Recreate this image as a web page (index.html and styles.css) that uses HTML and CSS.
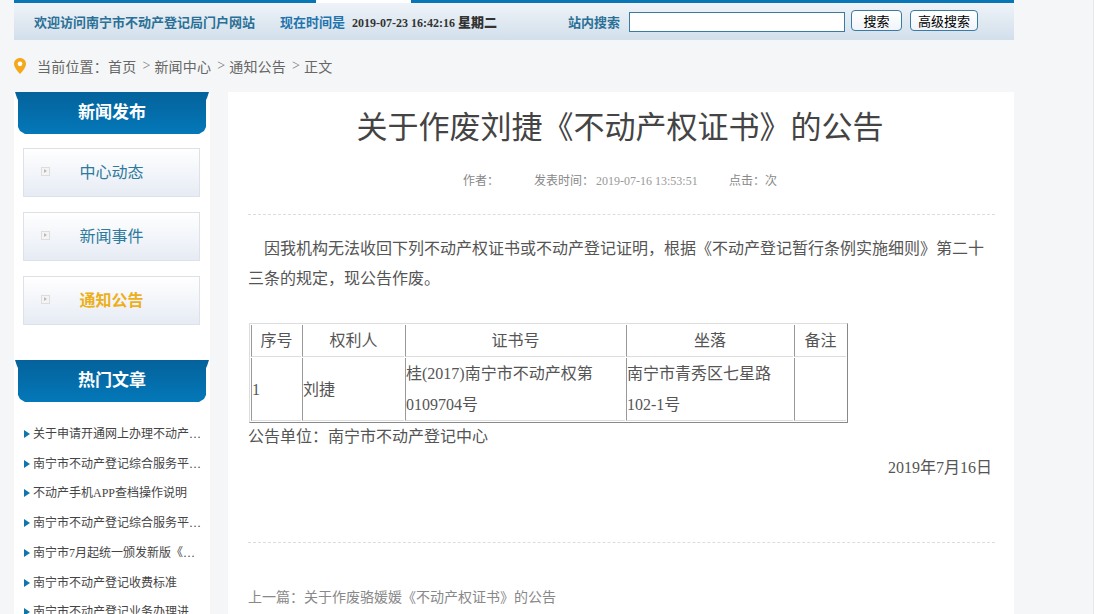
FILE: index.html
```html
<!DOCTYPE html>
<html lang="zh-CN">
<head>
    <meta charset="UTF-8">
    <title>关于作废刘捷《不动产权证书》的公告</title>
    <link rel="stylesheet" href="styles.css">
</head>
<body>
    <div class="wrap">
        <div class="topline"></div>
        <div class="topbar">
            <span class="welcome">欢迎访问南宁市不动产登记局门户网站</span>
            <span class="now">现在时间是</span>
            <span class="clock">2019-07-23 16:42:16 <b>星期二</b></span>
            <span class="search-label">站内搜索</span>
            <input class="search-input" type="text">
            <button class="search-btn" type="button">搜索</button>
            <button class="search-btn wide" type="button">高级搜索</button>
        </div>

        <div class="crumbs">
            <svg class="pin" width="12" height="16" viewBox="0 0 12 16">
                <path d="M6 0C2.700 0 0 2.600 0 5.900 0 9.900 6 16 6 16s6-6.100 6-10.100C12 2.600 9.300 0 6 0z" fill="#f5a81c"/>
                <circle cx="6" cy="5.800" r="2.400" fill="#fff"/>
            </svg>
            <span>当前位置：首页</span>
            <span class="sep">&gt;</span><span>新闻中心</span>
            <span class="sep">&gt;</span><span>通知公告</span>
            <span class="sep">&gt;</span><span>正文</span>
        </div>

        <div class="columns">
            <div class="side">
                <h2 class="side-title">新闻发布</h2>
                <ul class="side-menu">
                    <li><i class="arrow-box"></i>中心动态</li>
                    <li><i class="arrow-box"></i>新闻事件</li>
                    <li class="active"><i class="arrow-box"></i>通知公告</li>
                </ul>
                <h2 class="side-title">热门文章</h2>
                <ul class="hot-list">
                    <li>关于申请开通网上办理不动产登记业务的通知</li>
                    <li>南宁市不动产登记综合服务平台上线公告</li>
                    <li>不动产手机APP查档操作说明</li>
                    <li>南宁市不动产登记综合服务平台使用说明</li>
                    <li>南宁市7月起统一颁发新版《不动产权证书》</li>
                    <li>南宁市不动产登记收费标准</li>
                    <li>南宁市不动产登记业务办理进度查询</li>
                </ul>
            </div>

            <div class="main">
                <h1 class="title">关于作废刘捷《不动产权证书》的公告</h1>
                <div class="meta">
                    <span class="author">作者：</span>
                    <span class="time">发表时间：<span class="stamp">2019-07-16 13:53:51</span></span>
                    <span class="hits">点击：<span>次</span></span>
                </div>
                <div class="content">
                    <p class="indent">因我机构无法收回下列不动产权证书或不动产登记证明，根据《不动产登记暂行条例实施细则》第二十三条的规定，现公告作废。</p>
                    <table class="cert-table">
                        <tr class="head">
                            <td class="c1">序号</td>
                            <td class="c2">权利人</td>
                            <td class="c3">证书号</td>
                            <td class="c4">坐落</td>
                            <td class="c5">备注</td>
                        </tr>
                        <tr>
                            <td>1</td>
                            <td>刘捷</td>
                            <td>桂(2017)南宁市不动产权第0109704号</td>
                            <td>南宁市青秀区七星路102-1号</td>
                            <td></td>
                        </tr>
                    </table>
                    <p>公告单位：南宁市不动产登记中心</p>
                    <p class="date">2019年7月16日</p>
                </div>
                <div class="prev">上一篇：关于作废骆媛媛《不动产权证书》的公告</div>
            </div>
        </div>
    </div>
</body>
</html>
```

FILE: styles.css
```css
html, body {
    height: 614px;
    overflow: hidden;
}
body {
    margin: 0;
    background: #f5f6f7;
    border-right: 1px solid #e8e8e8;
    font-family: "Liberation Serif", "Noto Sans CJK SC", serif;
    color: #555;
}
ul, h1, h2, p {
    margin: 0;
    padding: 0;
}
ul {
    list-style: none;
}
.wrap {
    width: 1000px;
    margin-left: 14px;
}
.topline {
    height: 3px;
    background: linear-gradient(to right, #0875b5 302px, #fff 302px, #fff 397px, #0875b5 397px);
}
.topbar {
    display: flex;
    align-items: center;
    height: 37px;
    padding-left: 20px;
    background: linear-gradient(#eef3f8, #d2dfeb);
    font-size: 13px;
    font-weight: bold;
    color: #2a7096;
}
.now {
    margin-left: 25px;
    color: #1f74ad;
}
.clock {
    margin-left: 7px;
    width: 216px;
    font-size: 12px;
    color: #333;
}
.clock b {
    font-size: 13px;
}
.search-label {
    width: 61px;
    color: #2a7096;
}
.search-input {
    box-sizing: border-box;
    width: 216px;
    height: 20px;
    margin: 0 6px 0 0;
    padding: 0;
    background: #fff;
    border: 1px solid #3a7ba3;
}
.search-btn {
    box-sizing: border-box;
    width: 51px;
    height: 21px;
    margin: 0 8px 2px 0;
    padding: 0;
    background: linear-gradient(#fff, #f1f5f9);
    border: 1px solid #3a7ba3;
    border-radius: 4px;
    font-family: inherit;
    font-size: 13px;
    color: #000;
}
.search-btn.wide {
    width: 68px;
}
.crumbs {
    display: flex;
    align-items: center;
    height: 52px;
    font-size: 14px;
    letter-spacing: 0.2px;
    color: #666;
}
.pin {
    margin-right: 11px;
}
.sep {
    width: 8px;
    margin: 0 4px 0 6px;
    color: #777;
}
.columns {
    display: flex;
    align-items: flex-start;
}
.side {
    width: 196px;
    height: 522px;
    background: #fff;
}
.side-title {
    width: 194px;
    height: 42px;
    margin-left: 1px;
    background: linear-gradient(#04629b, #0478b9);
    clip-path: polygon(0 0, 194px 0, 192px 6px, 191px 8px, 191px 35px, 189px 39px, 184px 42px, 10px 42px, 5px 39px, 3px 35px, 3px 8px, 2px 6px);
    font-size: 17px;
    line-height: 41px;
    text-align: center;
    color: #fff;
}
.side-menu {
    padding: 14px 10px 35px 9px;
}
.side-menu li {
    position: relative;
    box-sizing: border-box;
    height: 49px;
    margin-bottom: 15px;
    background: linear-gradient(#fff, #e6ebf4);
    border: 1px solid #dde1e8;
    font-size: 16px;
    line-height: 48px;
    text-align: center;
    color: #2e7a9c;
}
.side-menu li:last-child {
    margin-bottom: 0;
}
.side-menu .active {
    font-weight: bold;
    color: #edaf1a;
}
.arrow-box {
    position: absolute;
    left: 17px;
    top: 18px;
    box-sizing: border-box;
    width: 9px;
    height: 9px;
    background: #f4f4f4;
    border: 1px solid #ddd;
}
.arrow-box::after {
    content: "";
    position: absolute;
    left: 2px;
    top: 1px;
    border-left: 3px solid #bbb;
    border-top: 2px solid transparent;
    border-bottom: 2px solid transparent;
}
.hot-list {
    padding: 18px 8px 0 10px;
}
.hot-list li {
    position: relative;
    padding-left: 9px;
    overflow: hidden;
    white-space: nowrap;
    text-overflow: ellipsis;
    font-size: 12px;
    line-height: 29.700px;
    color: #444;
}
.hot-list li::before {
    content: "";
    position: absolute;
    left: 0;
    top: 10px;
    border-left: 6px solid #0f75ad;
    border-top: 4px solid transparent;
    border-bottom: 4px solid transparent;
}
.main {
    box-sizing: border-box;
    width: 786px;
    height: 522px;
    margin-left: 18px;
    padding: 0 19px 0 20px;
    background: #fff;
}
.title {
    margin-right: 3px;
    padding-top: 14px;
    font-size: 31px;
    font-weight: normal;
    line-height: 44px;
    text-align: center;
    color: #444;
}
.meta {
    display: flex;
    justify-content: center;
    box-sizing: border-box;
    height: 58px;
    margin-top: 7px;
    padding-top: 14px;
    border-bottom: 1px dashed #ddd;
    font-size: 12px;
    line-height: 20px;
    color: #888;
}
.author {
    width: 71px;
}
.time {
    width: 195px;
}
.stamp {
    margin-left: 2px;
    color: #999;
}
.hits {
    width: 51px;
}
.content {
    box-sizing: border-box;
    height: 328px;
    padding-top: 19px;
    border-bottom: 1px dashed #ddd;
    font-size: 16px;
    line-height: 30px;
}
.indent {
    text-indent: 16px;
}
.cert-table {
    margin: 29px 0 -1px 1px;
    border: 1px solid;
    border-color: #ddd #888 #888 #ddd;
    border-spacing: 1px;
    border-collapse: separate;
    font-size: 16px;
    line-height: 31px;
}
.cert-table td {
    padding: 0;
    border: 1px solid;
    border-color: #999 #ddd #ddd #999;
    border-width: 0 0 1px 1px;
}
.cert-table .head td {
    height: 31px;
    text-align: center;
}
.c1 {
    width: 49px;
}
.c2 {
    width: 101px;
}
.c3 {
    width: 219px;
}
.c4 {
    width: 166px;
}
.c5 {
    width: 51px;
}
.date {
    padding: 1px 3px 0 0;
    text-align: right;
}
.prev {
    margin-top: 43px;
    font-size: 14px;
    color: #888;
}
```
